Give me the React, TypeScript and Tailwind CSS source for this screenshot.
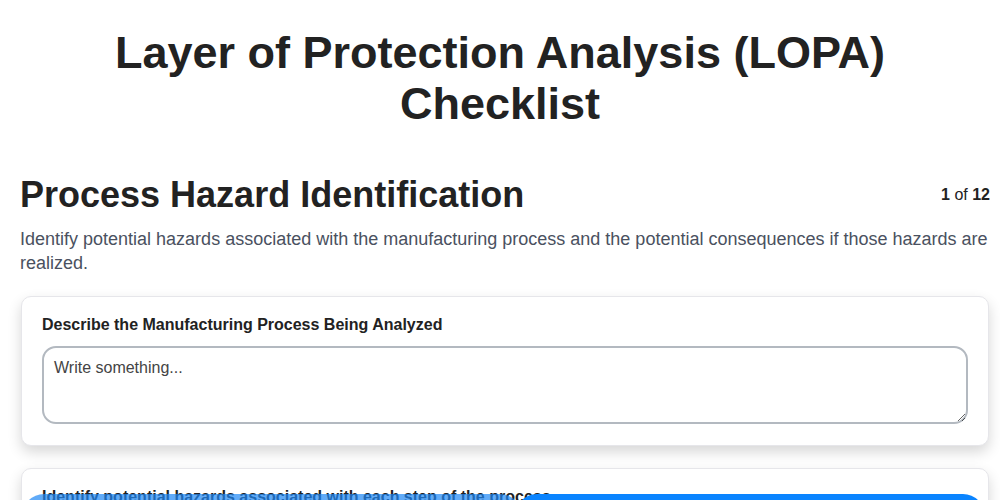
import React from "react";

export default function App() {
  return (
    <div className="min-h-screen bg-white text-[#222] [font-family:'Liberation_Sans',Arial,sans-serif]">
      <h1 className="pt-[27px] text-center text-[45px] font-bold leading-[51px] text-[#222] px-[100px]">
        Layer of Protection Analysis (LOPA) Checklist
      </h1>
      <div className="pl-5 pr-[10px] pt-[44px]">
        <div className="flex items-center justify-between">
          <h2 className="text-[36px] font-bold leading-[44px] text-[#222]">Process Hazard Identification</h2>
          <div className="text-[16px] text-[#222]">
            <span className="font-bold">1</span> of <span className="font-bold">12</span>
          </div>
        </div>
        <p className="mt-[10px] text-[18px] leading-[24px] text-[#4a5160]">
          Identify potential hazards associated with the manufacturing process and the potential consequences if those hazards are realized.
        </p>
        <div className="mt-[21px] flex flex-col gap-[22px] px-[1px]">
          <div className="rounded-[10px] border border-[#e6e6ea] bg-white px-5 pt-[19px] pb-[21px] shadow-[0_6px_14px_rgba(0,0,0,0.16)]">
            <label className="block text-[16px] font-bold leading-[18px] text-[#222]">
              Describe the Manufacturing Process Being Analyzed
            </label>
            <textarea
              placeholder="Write something..."
              className="mt-[12px] block h-[78px] w-full rounded-[14px] border-2 border-[#b3b9c0] px-[10px] pt-[10px] pb-[8px] text-[16px] leading-[20px] text-[#222] placeholder:text-[#444] outline-none"
            />
          </div>
          <div className="rounded-[10px] border border-[#e6e6ea] bg-white px-5 pt-[19px] pb-[21px] shadow-[0_6px_14px_rgba(0,0,0,0.16)]">
            <label className="block text-[16px] font-bold leading-[18px] text-[#222]">
              Identify potential hazards associated with each step of the process
            </label>
            <textarea
              placeholder="Write something..."
              className="mt-[12px] block h-[78px] w-full rounded-[14px] border-2 border-[#b3b9c0] px-[10px] pt-[10px] pb-[8px] text-[16px] leading-[20px] text-[#222] placeholder:text-[#444] outline-none"
            />
          </div>
        </div>
      </div>
      <div className="fixed left-[22px] top-[494px] flex">
        <button className="h-12 w-[500px] rounded-[22px] bg-[#1e88f5] opacity-70 text-white">Previous</button>
        <button className="-ml-[7px] h-12 w-[470px] rounded-[22px] bg-[#0a84ff] text-white">Next</button>
      </div>
    </div>
  );
}
